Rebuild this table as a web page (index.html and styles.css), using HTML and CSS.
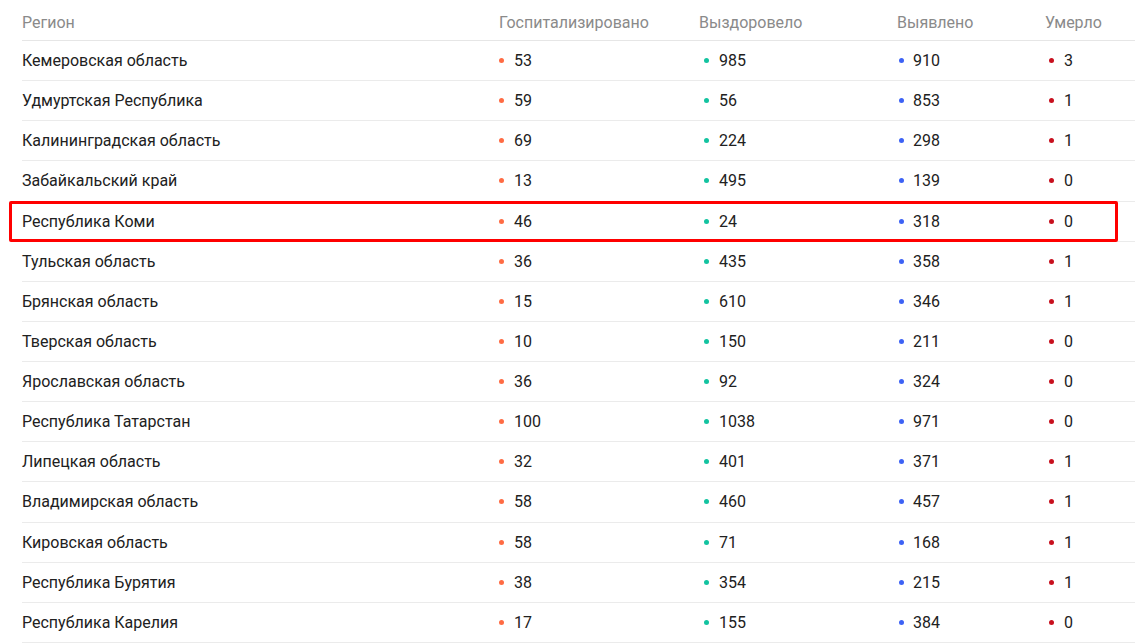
FILE: index.html
```html
<!DOCTYPE html>
<html lang="ru">
  <head>
    <meta charset="utf-8">
    <link rel="stylesheet" href="styles.css">
    <title>Статистика по регионам</title>
  </head>
  <body>
    <div class="table">
      <div class="row head">
        <div class="cell">Регион</div>
        <div class="cell">Госпитализировано</div>
        <div class="cell">Выздоровело</div>
        <div class="cell">Выявлено</div>
        <div class="cell">Умерло</div>
      </div>

      <div class="row">
        <div class="cell">Кемеровская область</div>
        <div class="cell num c-hosp"><i class="dot"></i>53</div>
        <div class="cell num c-rec"><i class="dot"></i>985</div>
        <div class="cell num c-det"><i class="dot"></i>910</div>
        <div class="cell num c-died"><i class="dot"></i>3</div>
      </div>
      <div class="row">
        <div class="cell">Удмуртская Республика</div>
        <div class="cell num c-hosp"><i class="dot"></i>59</div>
        <div class="cell num c-rec"><i class="dot"></i>56</div>
        <div class="cell num c-det"><i class="dot"></i>853</div>
        <div class="cell num c-died"><i class="dot"></i>1</div>
      </div>
      <div class="row">
        <div class="cell">Калининградская область</div>
        <div class="cell num c-hosp"><i class="dot"></i>69</div>
        <div class="cell num c-rec"><i class="dot"></i>224</div>
        <div class="cell num c-det"><i class="dot"></i>298</div>
        <div class="cell num c-died"><i class="dot"></i>1</div>
      </div>
      <div class="row">
        <div class="cell">Забайкальский край</div>
        <div class="cell num c-hosp"><i class="dot"></i>13</div>
        <div class="cell num c-rec"><i class="dot"></i>495</div>
        <div class="cell num c-det"><i class="dot"></i>139</div>
        <div class="cell num c-died"><i class="dot"></i>0</div>
      </div>
      <div class="row marked">
        <div class="cell">Республика Коми</div>
        <div class="cell num c-hosp"><i class="dot"></i>46</div>
        <div class="cell num c-rec"><i class="dot"></i>24</div>
        <div class="cell num c-det"><i class="dot"></i>318</div>
        <div class="cell num c-died"><i class="dot"></i>0</div>
      </div>
      <div class="row">
        <div class="cell">Тульская область</div>
        <div class="cell num c-hosp"><i class="dot"></i>36</div>
        <div class="cell num c-rec"><i class="dot"></i>435</div>
        <div class="cell num c-det"><i class="dot"></i>358</div>
        <div class="cell num c-died"><i class="dot"></i>1</div>
      </div>
      <div class="row">
        <div class="cell">Брянская область</div>
        <div class="cell num c-hosp"><i class="dot"></i>15</div>
        <div class="cell num c-rec"><i class="dot"></i>610</div>
        <div class="cell num c-det"><i class="dot"></i>346</div>
        <div class="cell num c-died"><i class="dot"></i>1</div>
      </div>
      <div class="row">
        <div class="cell">Тверская область</div>
        <div class="cell num c-hosp"><i class="dot"></i>10</div>
        <div class="cell num c-rec"><i class="dot"></i>150</div>
        <div class="cell num c-det"><i class="dot"></i>211</div>
        <div class="cell num c-died"><i class="dot"></i>0</div>
      </div>
      <div class="row">
        <div class="cell">Ярославская область</div>
        <div class="cell num c-hosp"><i class="dot"></i>36</div>
        <div class="cell num c-rec"><i class="dot"></i>92</div>
        <div class="cell num c-det"><i class="dot"></i>324</div>
        <div class="cell num c-died"><i class="dot"></i>0</div>
      </div>
      <div class="row">
        <div class="cell">Республика Татарстан</div>
        <div class="cell num c-hosp"><i class="dot"></i>100</div>
        <div class="cell num c-rec"><i class="dot"></i>1038</div>
        <div class="cell num c-det"><i class="dot"></i>971</div>
        <div class="cell num c-died"><i class="dot"></i>0</div>
      </div>
      <div class="row">
        <div class="cell">Липецкая область</div>
        <div class="cell num c-hosp"><i class="dot"></i>32</div>
        <div class="cell num c-rec"><i class="dot"></i>401</div>
        <div class="cell num c-det"><i class="dot"></i>371</div>
        <div class="cell num c-died"><i class="dot"></i>1</div>
      </div>
      <div class="row">
        <div class="cell">Владимирская область</div>
        <div class="cell num c-hosp"><i class="dot"></i>58</div>
        <div class="cell num c-rec"><i class="dot"></i>460</div>
        <div class="cell num c-det"><i class="dot"></i>457</div>
        <div class="cell num c-died"><i class="dot"></i>1</div>
      </div>
      <div class="row">
        <div class="cell">Кировская область</div>
        <div class="cell num c-hosp"><i class="dot"></i>58</div>
        <div class="cell num c-rec"><i class="dot"></i>71</div>
        <div class="cell num c-det"><i class="dot"></i>168</div>
        <div class="cell num c-died"><i class="dot"></i>1</div>
      </div>
      <div class="row">
        <div class="cell">Республика Бурятия</div>
        <div class="cell num c-hosp"><i class="dot"></i>38</div>
        <div class="cell num c-rec"><i class="dot"></i>354</div>
        <div class="cell num c-det"><i class="dot"></i>215</div>
        <div class="cell num c-died"><i class="dot"></i>1</div>
      </div>
      <div class="row">
        <div class="cell">Республика Карелия</div>
        <div class="cell num c-hosp"><i class="dot"></i>17</div>
        <div class="cell num c-rec"><i class="dot"></i>155</div>
        <div class="cell num c-det"><i class="dot"></i>384</div>
        <div class="cell num c-died"><i class="dot"></i>0</div>
      </div>
    </div>
  </body>
</html>
```

FILE: styles.css
```css
body {
  margin: 0;
  background: #fff;
  font-family: Roboto, "Liberation Sans", sans-serif;
  font-size: 16px;
  color: #212121;
}

.table {
  padding-left: 22px;
}

.row {
  display: grid;
  grid-template-columns: 477px 200px 198px 148px 1fr;
  align-items: center;
  height: 39.14px;
  border-bottom: 1px solid #ebebeb;
}

.row.head {
  height: 40px;
  padding-top: 0;
  align-items: start;
  color: #8a8a8a;
  border-bottom-color: #e6e6e6;
}

.row.head .cell {
  padding-top: 13px;
}

.cell {
  white-space: nowrap;
}

.num {
  display: flex;
  align-items: center;
}

.dot {
  display: inline-block;
  width: 5px;
  height: 5px;
  border-radius: 50%;
  margin-right: 10px;
}

.c-hosp .dot { background: #ff6b43; }
.c-rec { padding-left: 5px; }
.c-rec .dot { background: #13c3a0; }
.c-det { padding-left: 2px; }
.c-det .dot { background: #3d62f5; margin-right: 9px; }
.c-died { padding-left: 4px; }
.c-died .dot { background: #c8101e; }

.row.marked {
  position: relative;
}

.row.marked::after {
  content: "";
  position: absolute;
  left: -13px;
  right: 17px;
  top: -1px;
  bottom: -1px;
  border: 3px solid #ff0000;
  border-radius: 2px;
}
```
